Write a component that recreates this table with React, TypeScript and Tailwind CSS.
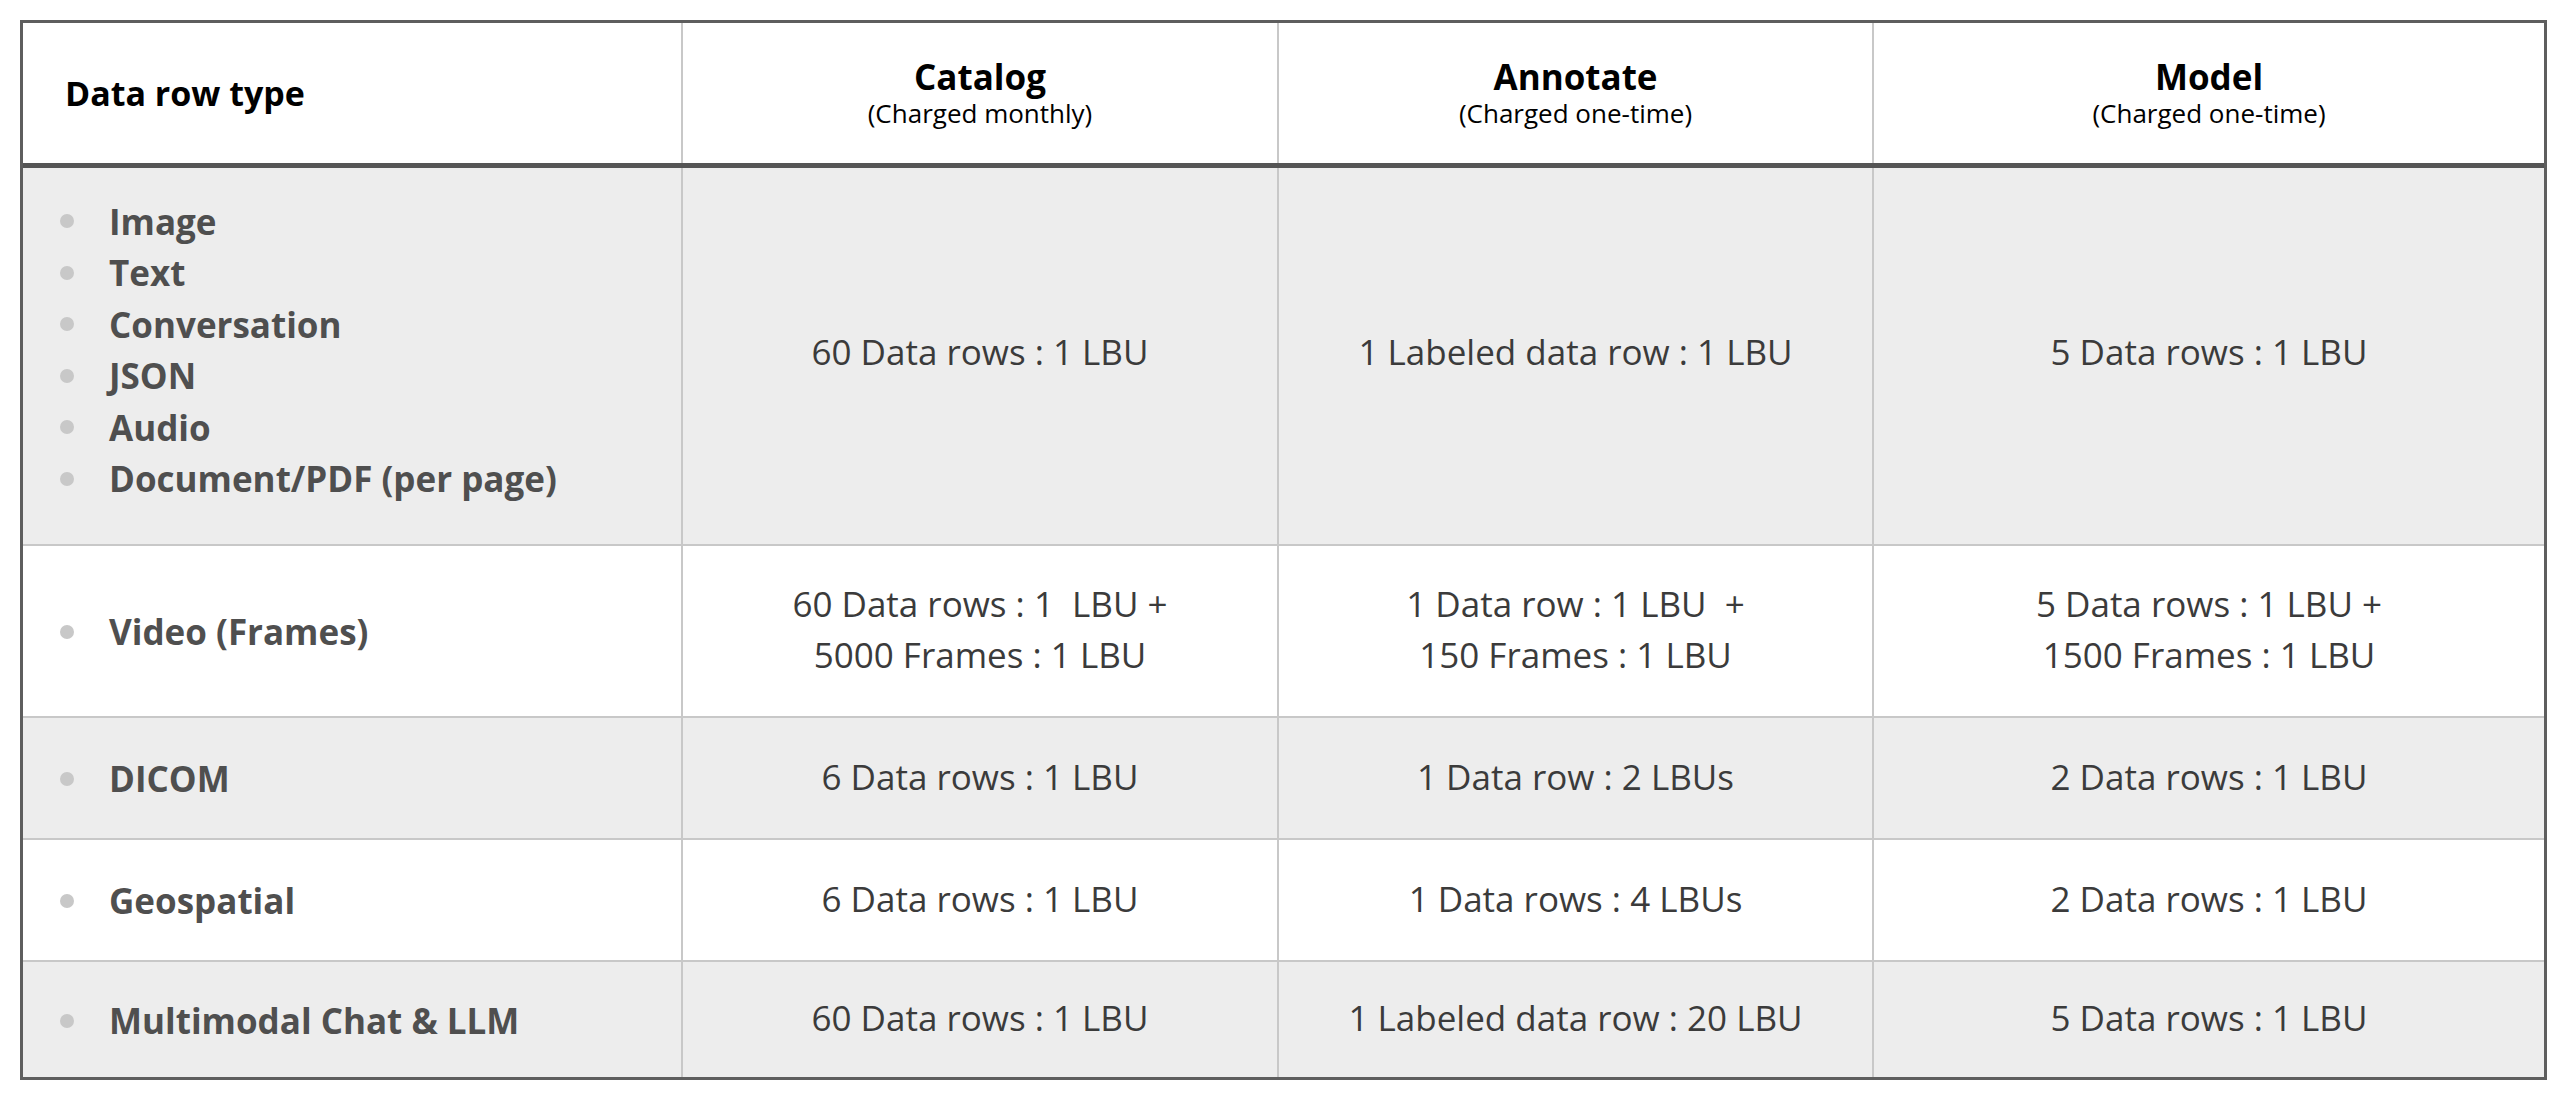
import React from "react"

type Row = {
  labels: string[]
  catalog: string[]
  annotate: string[]
  model: string[]
  height: string
  gray: boolean
}

const rows: Row[] = [
  {
    labels: ["Image", "Text", "Conversation", "JSON", "Audio", "Document/PDF (per page)"],
    catalog: ["60 Data rows : 1 LBU"],
    annotate: ["1 Labeled data row : 1 LBU"],
    model: ["5 Data rows : 1 LBU"],
    height: "h-[376px]",
    gray: true,
  },
  {
    labels: ["Video (Frames)"],
    catalog: ["60 Data rows : 1  LBU +", "5000 Frames : 1 LBU"],
    annotate: ["1 Data row : 1 LBU  +", "150 Frames : 1 LBU"],
    model: ["5 Data rows : 1 LBU +", "1500 Frames : 1 LBU"],
    height: "h-[172px]",
    gray: false,
  },
  {
    labels: ["DICOM"],
    catalog: ["6 Data rows : 1 LBU"],
    annotate: ["1 Data row : 2 LBUs"],
    model: ["2 Data rows : 1 LBU"],
    height: "h-[122px]",
    gray: true,
  },
  {
    labels: ["Geospatial"],
    catalog: ["6 Data rows : 1 LBU"],
    annotate: ["1 Data rows : 4 LBUs"],
    model: ["2 Data rows : 1 LBU"],
    height: "h-[122px]",
    gray: false,
  },
  {
    labels: ["Multimodal Chat & LLM"],
    catalog: ["60 Data rows : 1 LBU"],
    annotate: ["1 Labeled data row : 20 LBU"],
    model: ["5 Data rows : 1 LBU"],
    height: "h-[117px]",
    gray: true,
  },
]

const columns = [
  { title: "Catalog", note: "(Charged monthly)" },
  { title: "Annotate", note: "(Charged one-time)" },
  { title: "Model", note: "(Charged one-time)" },
]

function ValueCell({ lines, first }: { lines: string[]; first: boolean }) {
  return (
    <div
      className={`flex flex-col items-center justify-center border-l-2 border-[#c8c8c8] text-[35px] leading-[51px] text-[#3b3b3b] ${first ? "pb-[10px]" : "pb-[4px]"}`}
    >
      {lines.map((l) => (
        <span key={l} className="whitespace-pre">{l}</span>
      ))}
    </div>
  )
}

export default function App() {
  return (
    <div className="min-h-screen bg-white pt-[20px] pl-[20px] font-['Open_Sans','Liberation_Sans',sans-serif]">
      <div className="w-[2527px] border-[3px] border-[#5e5e5e]">
        {/* header */}
        <div className="grid h-[145px] grid-cols-[658px_596px_595px_672px] border-b-[5px] border-[#555555] bg-white">
          <div className="flex items-center pl-[42px] text-[34px] font-bold text-black">Data row type</div>
          {columns.map((c) => (
            <div key={c.title} className="flex flex-col items-center justify-center border-l-2 border-[#c8c8c8] text-black">
              <span className="text-[35px] font-bold leading-[40px]">{c.title}</span>
              <span className="text-[26px] leading-[32px]">{c.note}</span>
            </div>
          ))}
        </div>

        {rows.map((r, i) => (
          <div
            key={i}
            className={`grid grid-cols-[658px_596px_595px_672px] ${r.height} ${r.gray ? "bg-[#ededed]" : "bg-white"} ${i > 0 ? "border-t-2 border-[#c8c8c8]" : ""}`}
          >
            <ul className={`flex flex-col justify-center pl-[37px] ${i === 0 ? "pb-[12px]" : "pt-[2px]"}`}>
              {r.labels.map((l) => (
                <li key={l} className="flex items-center text-[35px] font-bold leading-[51.5px] text-[#4f4f4f]">
                  <span className="mr-[35px] h-[14px] w-[14px] rounded-full bg-[#c8c8c8]" />
                  {l}
                </li>
              ))}
            </ul>
            <ValueCell lines={r.catalog} first={i === 0} />
            <ValueCell lines={r.annotate} first={i === 0} />
            <ValueCell lines={r.model} first={i === 0} />
          </div>
        ))}
      </div>
    </div>
  )
}
